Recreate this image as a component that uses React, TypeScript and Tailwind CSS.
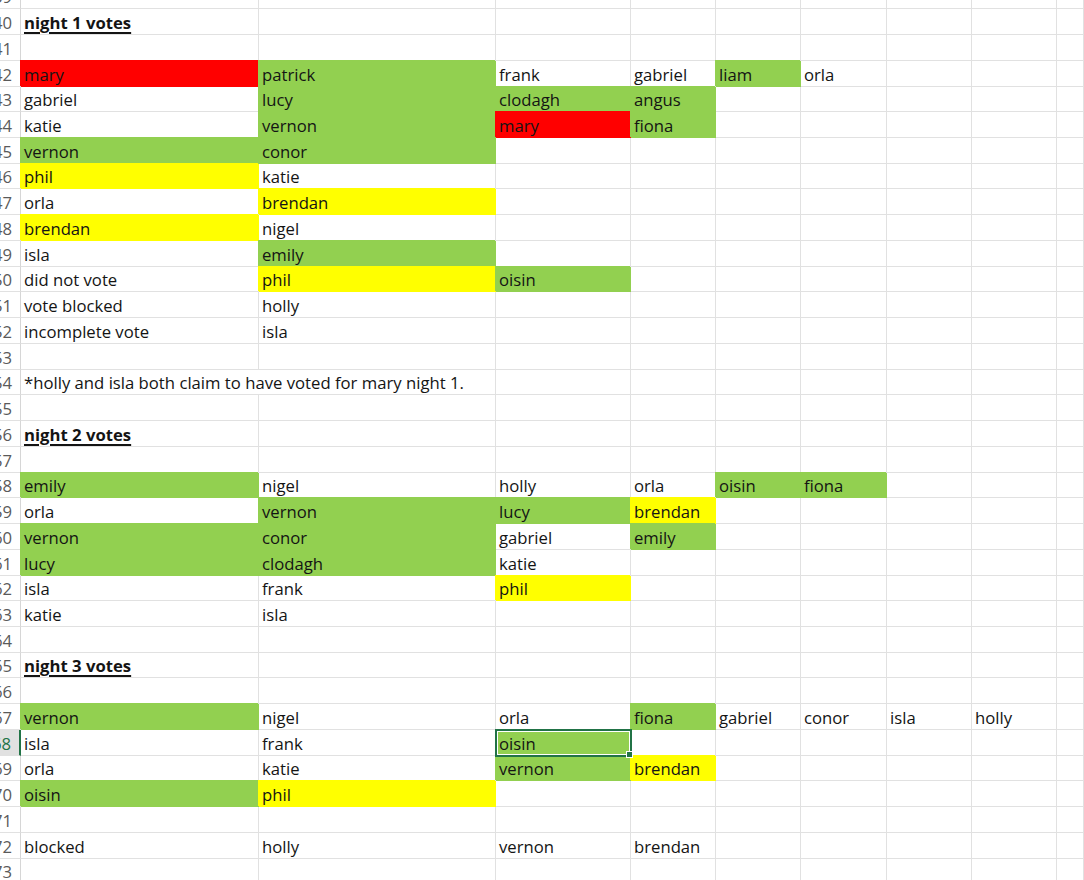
import React from "react";

type Fill = "r" | "g" | "y";
type Cell = { text: string; fill?: Fill; bold?: boolean; span?: number };

// fill covers its own gridlines (right/bottom via border, left/top via shifted shadow)
const FILL: Record<Fill, string> = {
  r: "bg-[#ff0000] border-[#ff0000] shadow-[-1px_-1px_0_0_#ff0000]",
  g: "bg-[#92d050] border-[#92d050] shadow-[-1px_-1px_0_0_#92d050]",
  y: "bg-[#ffff00] border-[#ffff00] shadow-[-1px_-1px_0_0_#ffff00]",
};

const DATA: Record<number, string[]> = {
  40: ["!night 1 votes"],
  42: ["mary:r", "patrick:g", "frank", "gabriel", "liam:g", "orla"],
  43: ["gabriel", "lucy:g", "clodagh:g", "angus:g"],
  44: ["katie", "vernon:g", "mary:r", "fiona:g"],
  45: ["vernon:g", "conor:g"],
  46: ["phil:y", "katie"],
  47: ["orla", "brendan:y"],
  48: ["brendan:y", "nigel"],
  49: ["isla", "emily:g"],
  50: ["did not vote", "phil:y", "oisin:g"],
  51: ["vote blocked", "holly"],
  52: ["incomplete vote", "isla"],
  56: ["!night 2 votes"],
  58: ["emily:g", "nigel", "holly", "orla", "oisin:g", "fiona:g"],
  59: ["orla", "vernon:g", "lucy:g", "brendan:y"],
  60: ["vernon:g", "conor:g", "gabriel", "emily:g"],
  61: ["lucy:g", "clodagh:g", "katie"],
  62: ["isla", "frank", "phil:y"],
  63: ["katie", "isla"],
  65: ["!night 3 votes"],
  67: ["vernon:g", "nigel", "orla", "fiona:g", "gabriel", "conor", "isla", "holly"],
  68: ["isla", "frank", "oisin:g"],
  69: ["orla", "katie", "vernon:g", "brendan:y"],
  70: ["oisin:g", "phil:y"],
  72: ["blocked", "holly", "vernon", "brendan"],
};

const COLS = 9;
const SEL_ROW = 68;
const SEL_COL = 2;

function parse(s: string): Cell {
  let text = s;
  let bold = false;
  let fill: Fill | undefined;
  if (text.startsWith("!")) {
    bold = true;
    text = text.slice(1);
  }
  const m = text.match(/^(.*):([rgy])$/);
  if (m) {
    text = m[1];
    fill = m[2] as Fill;
  }
  return { text, fill, bold };
}

function rowCells(n: number): Cell[] {
  if (n === 54) {
    // note spills over column B, so the A|B gridline is hidden
    return [
      { text: "*holly and isla both claim to have voted for mary night 1.", span: 2 },
      ...Array.from({ length: COLS - 2 }, () => ({ text: "" })),
    ];
  }
  const raw = DATA[n] ?? [];
  return Array.from({ length: COLS }, (_, i) => (raw[i] ? parse(raw[i]) : { text: "" }));
}

function RowHeader({ n }: { n: number }) {
  const sel = n === SEL_ROW;
  return (
    <div
      className={
        "flex items-end justify-end overflow-hidden whitespace-nowrap pr-[8px] pb-[1px] border-b border-[#e1e1e1] " +
        (sel ? "bg-[#e1e1e1] text-[#217346] border-r-2 border-r-[#217346]" : "text-[#5a5a5a] border-r border-r-[#d6d6d6]")
      }
    >
      {n}
    </div>
  );
}

function SheetCell({ cell, selected }: { cell: Cell; selected: boolean }) {
  let cls = "flex items-end whitespace-nowrap pl-[3px] pb-[1px] border-r border-b ";
  if (selected) {
    cls +=
      "relative z-10 bg-[#92d050] border-[#217346] shadow-[0_0_0_1px_#217346,inset_1px_1px_0_0_#217346,inset_2px_2px_0_0_#ffffff,inset_-1px_-1px_0_0_#ffffff]";
  } else if (cell.fill) {
    cls += FILL[cell.fill];
  } else {
    cls += "border-[#e1e1e1]";
  }
  if (cell.span === 2) cls += " col-span-2";
  return (
    <div className={cls}>
      <span className={cell.bold ? "font-bold underline decoration-[1.5px] underline-offset-[3px]" : ""}>{cell.text}</span>
      {selected && (
        <span className="absolute -right-[3px] -bottom-[3px] w-[7px] h-[7px] bg-[#217346] border border-white" />
      )}
    </div>
  );
}

export default function App() {
  const rows = Array.from({ length: 35 }, (_, i) => 39 + i);
  return (
    <div className="w-[1084px] h-[880px] overflow-hidden bg-white">
      <div
        className="-mt-[16.4px] grid grid-cols-[21px_238px_237px_135px_85px_85px_86px_85px_85px_1fr] auto-rows-[25.74px] text-[16.7px] leading-[20px] text-[#141414]"
        style={{ fontFamily: '"Open Sans", "Liberation Sans", sans-serif' }}
      >
        {rows.map((n) => (
          <React.Fragment key={n}>
            <RowHeader n={n} />
            {rowCells(n).map((c, i) => (
              <SheetCell key={i} cell={c} selected={n === SEL_ROW && i === SEL_COL} />
            ))}
          </React.Fragment>
        ))}
      </div>
    </div>
  );
}
